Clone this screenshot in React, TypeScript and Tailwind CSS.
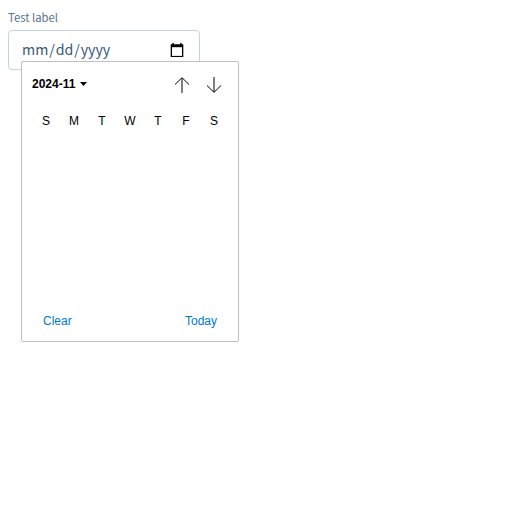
const weekdays = ["S", "M", "T", "W", "T", "F", "S"];

function CalendarIcon() {
  return (
    <svg className="block h-[14px] w-[14px]" viewBox="0 0 14 14" fill="none">
      <path d="M2.4 0H3.8v1.2h6.4V0h1.4v1.2H13.3V14H.7V1.2h1.7z" fill="#000" />
      <rect x="2" y="4.2" width="10" height="8.7" fill="#fff" />
    </svg>
  );
}

function ArrowIcon({ down = false }: { down?: boolean }) {
  return (
    <svg
      className={down ? "block h-4 w-4 rotate-180" : "block h-4 w-4"}
      viewBox="0 0 16 16"
      fill="none"
      stroke="#000"
    >
      <path d="M8 16V1M1 7.5L8 .7l7 6.8" strokeWidth="1" />
    </svg>
  );
}

function Picker() {
  return (
    <div className="absolute top-[31px] left-[13px] flex h-[281px] w-[218px] flex-col rounded-[2px] border border-[#bfbfbf] bg-white font-['Liberation_Sans',Arial,sans-serif] text-[12px] text-black">
      <div className="flex h-[44px] items-center pr-4 pl-[10px]">
        <button className="flex items-center gap-[4.5px] font-bold">
          2024-11
          <svg className="h-1 w-[7px]" viewBox="0 0 7 4">
            <path d="M0 0h7L3.5 4z" fill="#000" />
          </svg>
        </button>
        <div className="ml-auto flex gap-4 pt-[2px]">
          <ArrowIcon />
          <ArrowIcon down />
        </div>
      </div>
      <div className="mt-px grid grid-cols-7 px-[10px] text-center leading-[28px]">
        {weekdays.map((day, i) => (
          <span key={i}>{day}</span>
        ))}
      </div>
      <div className="mt-auto flex justify-between px-[21px] pb-[12px] leading-4 text-[#0078d7]">
        <button>Clear</button>
        <button>Today</button>
      </div>
    </div>
  );
}

export default function App() {
  return (
    <main className="h-[512px] bg-white p-2 font-['Noto_Sans_CJK_JP',sans-serif] text-[#3a5a76]">
      <label className="mb-1 block h-[18px] text-[11.3px] leading-[18px] text-[#577590]">Test label</label>
      <div className="relative h-10 w-48">
        <div className="flex h-10 items-center justify-between rounded-[4px] border border-[#c4d4e1] px-[13px]">
          <span className="flex pb-[3px] text-[14.2px] leading-6">
            <span className="pr-px">mm</span>
            <span>/</span>
            <span className="px-[0.9px]">dd</span>
            <span>/</span>
            <span className="pl-[0.9px]">yyyy</span>
          </span>
          <span className="mr-[2px] pb-px">
            <CalendarIcon />
          </span>
        </div>
        <Picker />
      </div>
    </main>
  );
}
